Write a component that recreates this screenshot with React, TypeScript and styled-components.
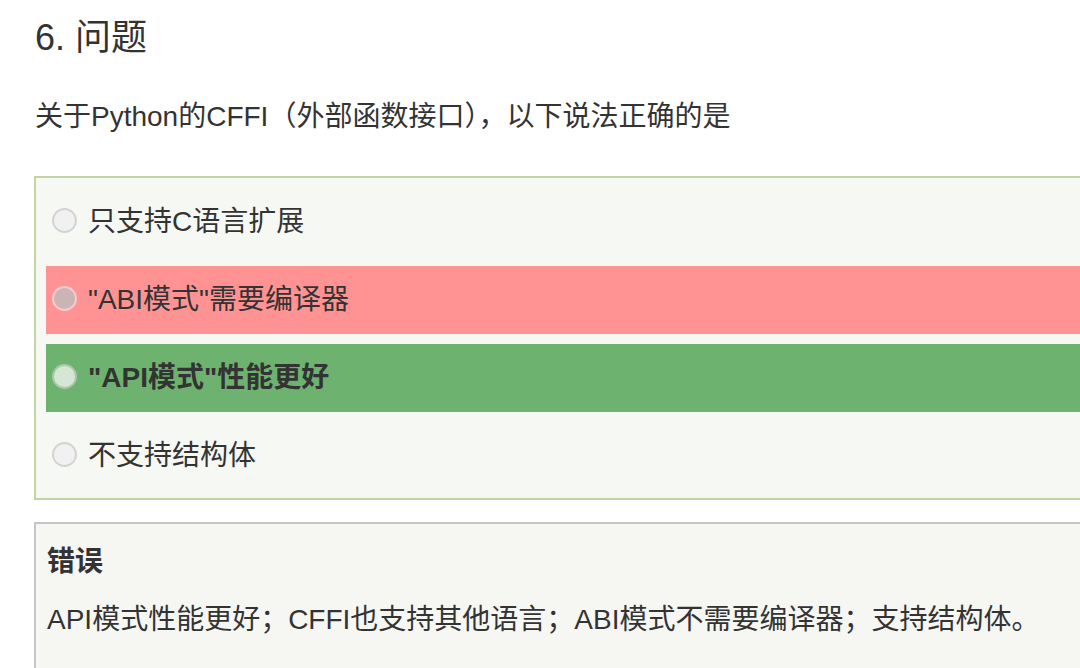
import styled, { createGlobalStyle } from "styled-components";

type Status = "none" | "wrong" | "right";

const options: { text: string; status: Status }[] = [
  { text: "只支持C语言扩展", status: "none" },
  { text: "\"ABI模式\"需要编译器", status: "wrong" },
  { text: "\"API模式\"性能更好", status: "right" },
  { text: "不支持结构体", status: "none" },
];

function App() {
  return (
    <Page>
      <GlobalStyle />
      <Title>6. 问题</Title>
      <Question>关于Python的CFFI（外部函数接口），以下说法正确的是</Question>
      <OptionsBox>
        {options.map((o) => (
          <OptionRow key={o.text} status={o.status}>
            <Radio status={o.status} />
            <OptionText bold={o.status === "right"}>{o.text}</OptionText>
          </OptionRow>
        ))}
      </OptionsBox>
      <Explanation>
        <Verdict>错误</Verdict>
        <ExplanationText>
          API模式性能更好；CFFI也支持其他语言；ABI模式不需要编译器；支持结构体。
        </ExplanationText>
      </Explanation>
    </Page>
  );
}

const GlobalStyle = createGlobalStyle`
  html, body {
    margin: 0;
    padding: 0;
    background: #ffffff;
    overflow: hidden;
  }
  body {
    font-family: "Liberation Sans", "Noto Sans CJK SC", sans-serif;
    color: #333333;
  }
`;

const Page = styled.div`
  width: 1200px;
  padding: 16px 0 0 34px;
  box-sizing: border-box;
`;

const Title = styled.div`
  font-size: 36px;
  line-height: 43px;
  padding-left: 1px;
`;

const Question = styled.div`
  margin-top: 37px;
  font-size: 28px;
  line-height: 42px;
  padding-left: 1px;
`;

const OptionsBox = styled.div`
  margin-top: 38px;
  border: 2px solid #c4d3a2;
  background: #f6f8f3;
  padding: 10px 10px 8px 10px;
  display: flex;
  flex-direction: column;
  gap: 10px;
`;

const rowColors: Record<Status, string> = {
  none: "transparent",
  wrong: "#ff9393",
  right: "#6db36f",
};

const OptionRow = styled.div<{ status: Status }>`
  height: 68px;
  display: flex;
  align-items: center;
  background: ${(p) => rowColors[p.status]};
  padding-left: 6px;
`;

const radioFill: Record<Status, string> = {
  none: "#f2f1f1",
  wrong: "#cbb4b6",
  right: "#d5e6d5",
};

const radioBorder: Record<Status, string> = {
  none: "#d3d3d3",
  wrong: "#f5cccd",
  right: "#a9c8aa",
};

const Radio = styled.span<{ status: Status }>`
  width: 21px;
  height: 21px;
  border-radius: 50%;
  border: 2px solid ${(p) => radioBorder[p.status]};
  background: ${(p) => radioFill[p.status]};
  margin-right: 11px;
  margin-top: -4px;
  flex-shrink: 0;
`;

const OptionText = styled.span<{ bold?: boolean }>`
  font-size: 28px;
  line-height: 42px;
  font-weight: ${(p) => (p.bold ? 700 : 400)};
`;

const Explanation = styled.div`
  margin-top: 22px;
  border: 2px solid #c6c6c6;
  border-right: none;
  border-bottom: none;
  background: #f6f7f3;
  padding: 17px 0 40px 11px;
`;

const Verdict = styled.div`
  font-size: 28px;
  line-height: 42px;
  font-weight: 700;
`;

const ExplanationText = styled.div`
  margin-top: 16px;
  font-size: 28px;
  line-height: 42px;
`;

export default App;
